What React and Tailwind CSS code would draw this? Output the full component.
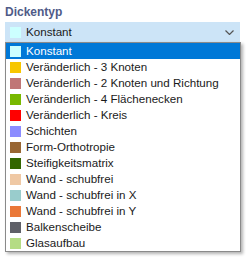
const ITEMS = [
  { label: "Konstant", color: "bg-[#ccffff]" },
  { label: "Veränderlich - 3 Knoten", color: "bg-[#f7c600]" },
  { label: "Veränderlich - 2 Knoten und Richtung", color: "bg-[#c07676]" },
  { label: "Veränderlich - 4 Flächenecken", color: "bg-[#78b800]" },
  { label: "Veränderlich - Kreis", color: "bg-[#ff0000]" },
  { label: "Schichten", color: "bg-[#8c8cff]" },
  { label: "Form-Orthotropie", color: "bg-[#996633]" },
  { label: "Steifigkeitsmatrix", color: "bg-[#336600]" },
  { label: "Wand - schubfrei", color: "bg-[#efc8a4]" },
  { label: "Wand - schubfrei in X", color: "bg-[#99cccc]" },
  { label: "Wand - schubfrei in Y", color: "bg-[#ea7838]" },
  { label: "Balkenscheibe", color: "bg-[#5f6068]" },
  { label: "Glasaufbau", color: "bg-[#b5dc84]" },
];

const Chevron = () => (
  <svg width="9" height="5" viewBox="0 0 9 5" fill="none" stroke="#555" strokeWidth="1.2">
    <path d="M0.5 0.5L4.5 4.5L8.5 0.5" />
  </svg>
);

export default function App() {
  return (
    <div className="w-[248px] h-[257px] bg-white text-[11.6px] text-[#1a1a1a]" style={{ fontFamily: '"Liberation Sans", Arial, sans-serif' }}>
      <div className="pl-[5px] pt-[3px] h-[22px] font-bold text-[12px] text-[#4f5b88]">Dickentyp</div>

      {/* combobox */}
      <div className="ml-[5px] w-[235px] h-[20px] bg-[#cce4f7] flex items-center pl-[5px] pr-[6px]">
        <span className="w-[11px] h-[11px] bg-[#ccffff] mr-[5px]" />
        <span className="flex-1">Konstant</span>
        <Chevron />
      </div>

      {/* dropdown list */}
      <div className="ml-[5px] w-[236px] border border-[#8a8a8a] bg-white shadow-[2px_2px_3px_rgba(0,0,0,0.3)]">
        {ITEMS.map((it, i) => (
          <div
            key={it.label}
            className={`h-[16px] flex items-center pl-[4px] whitespace-nowrap ${i === 0 ? "bg-[#0078d7] text-white" : ""}`}
          >
            <span className={`w-[11px] h-[11px] mr-[5px] shrink-0 ${it.color}`} />
            {it.label}
          </div>
        ))}
      </div>
    </div>
  );
}
